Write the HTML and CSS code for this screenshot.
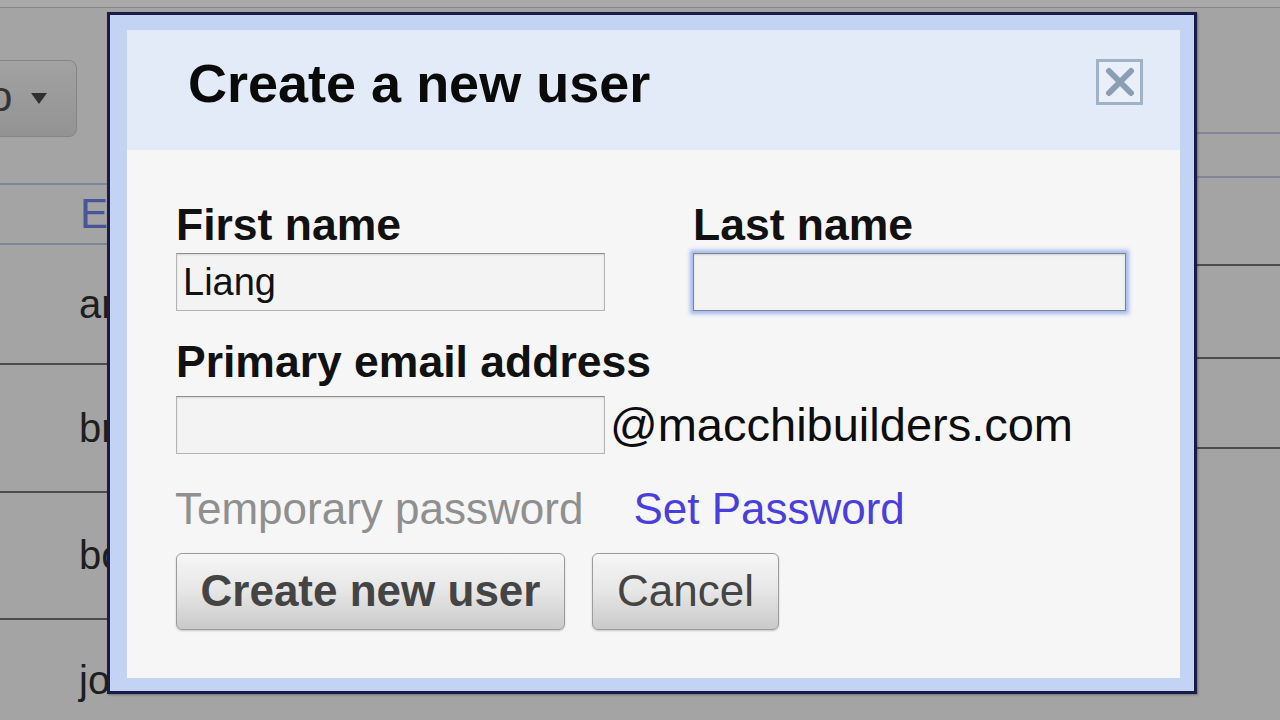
FILE: index.html
```html
<!DOCTYPE html>
<html>
<head>
    <title>Create a new user</title>
    <link rel="stylesheet" href="styles.css">
</head>
<body>
    <div class="top-strip"></div>
    <div class="page">
        <div class="side side-left">
            <div class="toolbar">
                <div class="dropdown"><span class="dd-text">o</span><span class="dd-caret"></span></div>
            </div>
            <div class="head-row">E</div>
            <div class="row row-1">ar</div>
            <div class="row row-2">br</div>
            <div class="row row-3">bc</div>
            <div class="row row-4">jo</div>
        </div>
        <div class="side side-right">
            <div class="r r1"></div>
            <div class="r r2"></div>
            <div class="r r3"></div>
            <div class="r r4"></div>
            <div class="r r5"></div>
        </div>
    </div>

    <!-- modal dialog over the user list -->
    <div class="dialog">
        <div class="dialog-inner">
            <div class="dialog-head">
                <h1>Create a new user</h1>
                <div class="close-btn">
                    <svg width="30" height="30" viewBox="0 0 30 30">
                        <path d="M4 4 L26 26 M26 4 L4 26" stroke="#8c9db4" stroke-width="6" stroke-linecap="round"/>
                    </svg>
                </div>
            </div>
            <div class="dialog-body">
                <div class="name-grid">
                    <div class="field">
                        <div class="label">First name</div>
                        <div class="input">Liang</div>
                    </div>
                    <div class="field">
                        <div class="label">Last name</div>
                        <div class="input focused"></div>
                    </div>
                </div>
                <div class="label email-label">Primary email address</div>
                <div class="email-row">
                    <div class="input email-input"></div>
                    <span class="domain">@macchibuilders.com</span>
                </div>
                <div class="pw-row">
                    <span class="pw-label">Temporary password</span>
                    <span class="pw-link">Set Password</span>
                </div>
                <div class="btn-row">
                    <div class="btn btn-create">Create new user</div>
                    <div class="btn btn-cancel">Cancel</div>
                </div>
            </div>
        </div>
    </div>
</body>
</html>
```

FILE: styles.css
```css
html, body {
    margin: 0;
    padding: 0;
}

body {
    width: 1280px;
    height: 720px;
    overflow: hidden;
    background: #a4a4a4;
    font-family: "Liberation Sans", Arial, sans-serif;
    color: #111;
    position: relative;
}

.top-strip {
    height: 7px;
    border-bottom: 1px solid #85868c;
    background: #a9a9a9;
}

.page {
    display: flex;
    justify-content: space-between;
    height: 712px;
}

.side {
    display: flex;
    flex-direction: column;
}

.side-left {
    width: 120px;
    overflow: hidden;
}

.side-right {
    width: 90px;
}

.toolbar {
    height: 175px;
    border-bottom: 2px solid #7f85a0;
}

.dropdown {
    margin-top: 52px;
    margin-left: -12px;
    width: 89px;
    height: 77px;
    box-sizing: border-box;
    border: 1px solid #858585;
    border-radius: 8px;
    background: linear-gradient(#a2a2a2, #939393);
    display: flex;
    align-items: center;
    gap: 19px;
}

.dd-text {
    font-size: 42px;
    color: #333;
    line-height: 1;
    margin-top: -4px;
}

.dd-caret {
    width: 0;
    height: 0;
    border-left: 8px solid transparent;
    border-right: 8px solid transparent;
    border-top: 11px solid #303030;
}

.head-row {
    height: 58px;
    border-bottom: 2px solid #80859a;
    padding-left: 80px;
    font-size: 42px;
    line-height: 58px;
    color: #4a5598;
}

.row {
    padding-left: 79px;
    font-size: 40px;
    color: #1e1e1e;
    border-bottom: 2px solid #4c4c4c;
}

.row-1 {
    height: 118px;
    line-height: 118px;
}

.row-2 {
    height: 126px;
    line-height: 126px;
}

.row-3 {
    height: 125px;
    line-height: 125px;
}

.row-4 {
    height: 100px;
    line-height: 120px;
    border-bottom: none;
}

.r {
    border-bottom: 2px solid #4c4c4c;
}

.r1 {
    height: 124px;
    border-bottom-color: #80859a;
}

.r2 {
    height: 42px;
    border-bottom-color: #80859a;
}

.r3 {
    height: 86px;
}

.r4 {
    height: 91px;
}

.r5 {
    height: 88px;
}

/* dialog */

.dialog {
    position: absolute;
    left: 107px;
    top: 12px;
    width: 1090px;
    height: 682px;
    box-sizing: border-box;
    border: 3px solid #1b1b4a;
    background: #c3d3f4;
    padding: 15px 14px 13px 17px;
    box-shadow: 1px 1px 2px rgba(0, 0, 0, 0.3);
}

.dialog-inner {
    height: 100%;
    background: #f6f6f7;
    display: flex;
    flex-direction: column;
}

.dialog-head {
    height: 120px;
    box-sizing: border-box;
    background: #e3ebf8;
    padding: 23px 37px 0 61px;
    display: flex;
    justify-content: space-between;
    align-items: flex-start;
}

h1 {
    margin: 0;
    font-size: 54px;
    line-height: 60px;
    font-weight: bold;
    color: #0a0a0a;
}

.close-btn {
    margin-top: 6px;
    width: 47px;
    height: 46px;
    box-sizing: border-box;
    border: 3px solid #a2b2c6;
    background: #eaf0f9;
    display: flex;
    align-items: center;
    justify-content: center;
}

.dialog-body {
    padding: 50px 0 0 49px;
}

.name-grid {
    display: grid;
    grid-template-columns: 429px 433px;
    column-gap: 88px;
}

.label {
    font-size: 44.5px;
    font-weight: bold;
    line-height: 50px;
    color: #111;
}

.field .input {
    margin-top: 3px;
}

.input {
    height: 58px;
    box-sizing: border-box;
    border: 1px solid #b4b4b4;
    border-top-color: #8e8e8e;
    background: #f3f3f3;
    box-shadow: inset 0 1px 2px rgba(0, 0, 0, 0.12);
    padding-left: 6px;
    font-size: 38px;
    line-height: 56px;
    color: #111;
}

.input.focused {
    border-color: #7f8598;
    box-shadow: 0 0 4px 3px #a3b8ec, inset 0 1px 2px rgba(0, 0, 0, 0.15);
}

.email-label {
    margin-top: 26px;
}

.email-row {
    margin-top: 9px;
    display: flex;
    align-items: center;
    gap: 5px;
}

.email-input {
    width: 429px;
}

.domain {
    font-size: 47px;
    line-height: 58px;
    color: #0d0d0d;
}

.pw-row {
    margin-top: 30px;
    display: flex;
    gap: 50px;
    font-size: 44px;
    line-height: 50px;
}

.pw-label {
    color: #8f8f8f;
    margin-left: -1px;
}

.pw-link {
    color: #4a3fdc;
}

.btn-row {
    margin-top: 19px;
    display: flex;
    gap: 27px;
}

.btn {
    height: 77px;
    box-sizing: border-box;
    border: 1px solid #9c9c9c;
    border-radius: 6px;
    background: linear-gradient(#f6f6f6, #e6e6e6 50%, #c9c9c9);
    box-shadow: 0 1px 2px rgba(0, 0, 0, 0.2);
    font-size: 44px;
    line-height: 73px;
    text-align: center;
    color: #444;
}

.btn-create {
    width: 389px;
    font-weight: bold;
}

.btn-cancel {
    width: 187px;
}
```
